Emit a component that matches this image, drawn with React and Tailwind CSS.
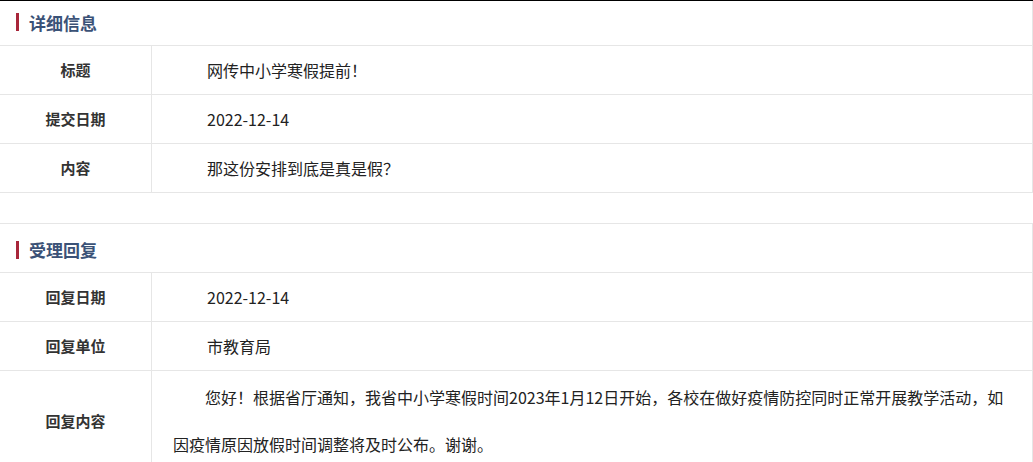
const detailRows = [
  { label: '标题', value: '网传中小学寒假提前！' },
  { label: '提交日期', value: '2022-12-14' },
  { label: '内容', value: '那这份安排到底是真是假？' },
]

const replyRows = [
  { label: '回复日期', value: '2022-12-14' },
  { label: '回复单位', value: '市教育局' },
]

function SectionTitle({ title, className = '' }) {
  return (
    <div className={`flex items-center border-b border-[#e6e6e6] pl-4 ${className}`}>
      <span className="h-[18px] w-[3px] bg-[#a8263a]" />
      <h2 className="ml-[10px] text-[17px] font-bold leading-none text-[#3b5277]">{title}</h2>
    </div>
  )
}

function InfoRow({ label, value }) {
  return (
    <div className="flex h-[49px] border-b border-[#e6e6e6]">
      <div className="flex w-[152px] shrink-0 items-center justify-center border-r border-[#e6e6e6] text-[15px] font-bold text-[#333]">
        {label}
      </div>
      <div className="flex flex-1 items-center pl-[55px] text-[16px] text-[#222]">{value}</div>
    </div>
  )
}

export default function App() {
  return (
    <div className="h-[462px] w-[1033px] overflow-hidden border-t border-black bg-white font-['Noto_Sans_CJK_SC',sans-serif]">
      <div className="border-r border-[#e6e6e6]">
        <SectionTitle title="详细信息" className="h-[45px] pb-[2px]" />
        {detailRows.map((row) => (
          <InfoRow key={row.label} {...row} />
        ))}
      </div>

      <div className="mt-[30px] border-r border-t border-[#e6e6e6]">
        <SectionTitle title="受理回复" className="h-[49px] pt-[3px]" />
        {replyRows.map((row) => (
          <InfoRow key={row.label} {...row} />
        ))}
        <div className="flex border-b border-[#e6e6e6]">
          <div className="flex w-[152px] shrink-0 items-center justify-center border-r border-[#e6e6e6] text-[15px] font-bold text-[#333]">
            回复内容
          </div>
          <p className="flex-1 py-[3px] pl-[21px] pr-4 indent-[2em] text-[16px] leading-[47px] text-[#222]">
            您好！根据省厅通知，我省中小学寒假时间2023年1月12日开始，各校在做好疫情防控同时正常开展教学活动，如
            <br />
            因疫情原因放假时间调整将及时公布。谢谢。
          </p>
        </div>
      </div>
    </div>
  )
}
